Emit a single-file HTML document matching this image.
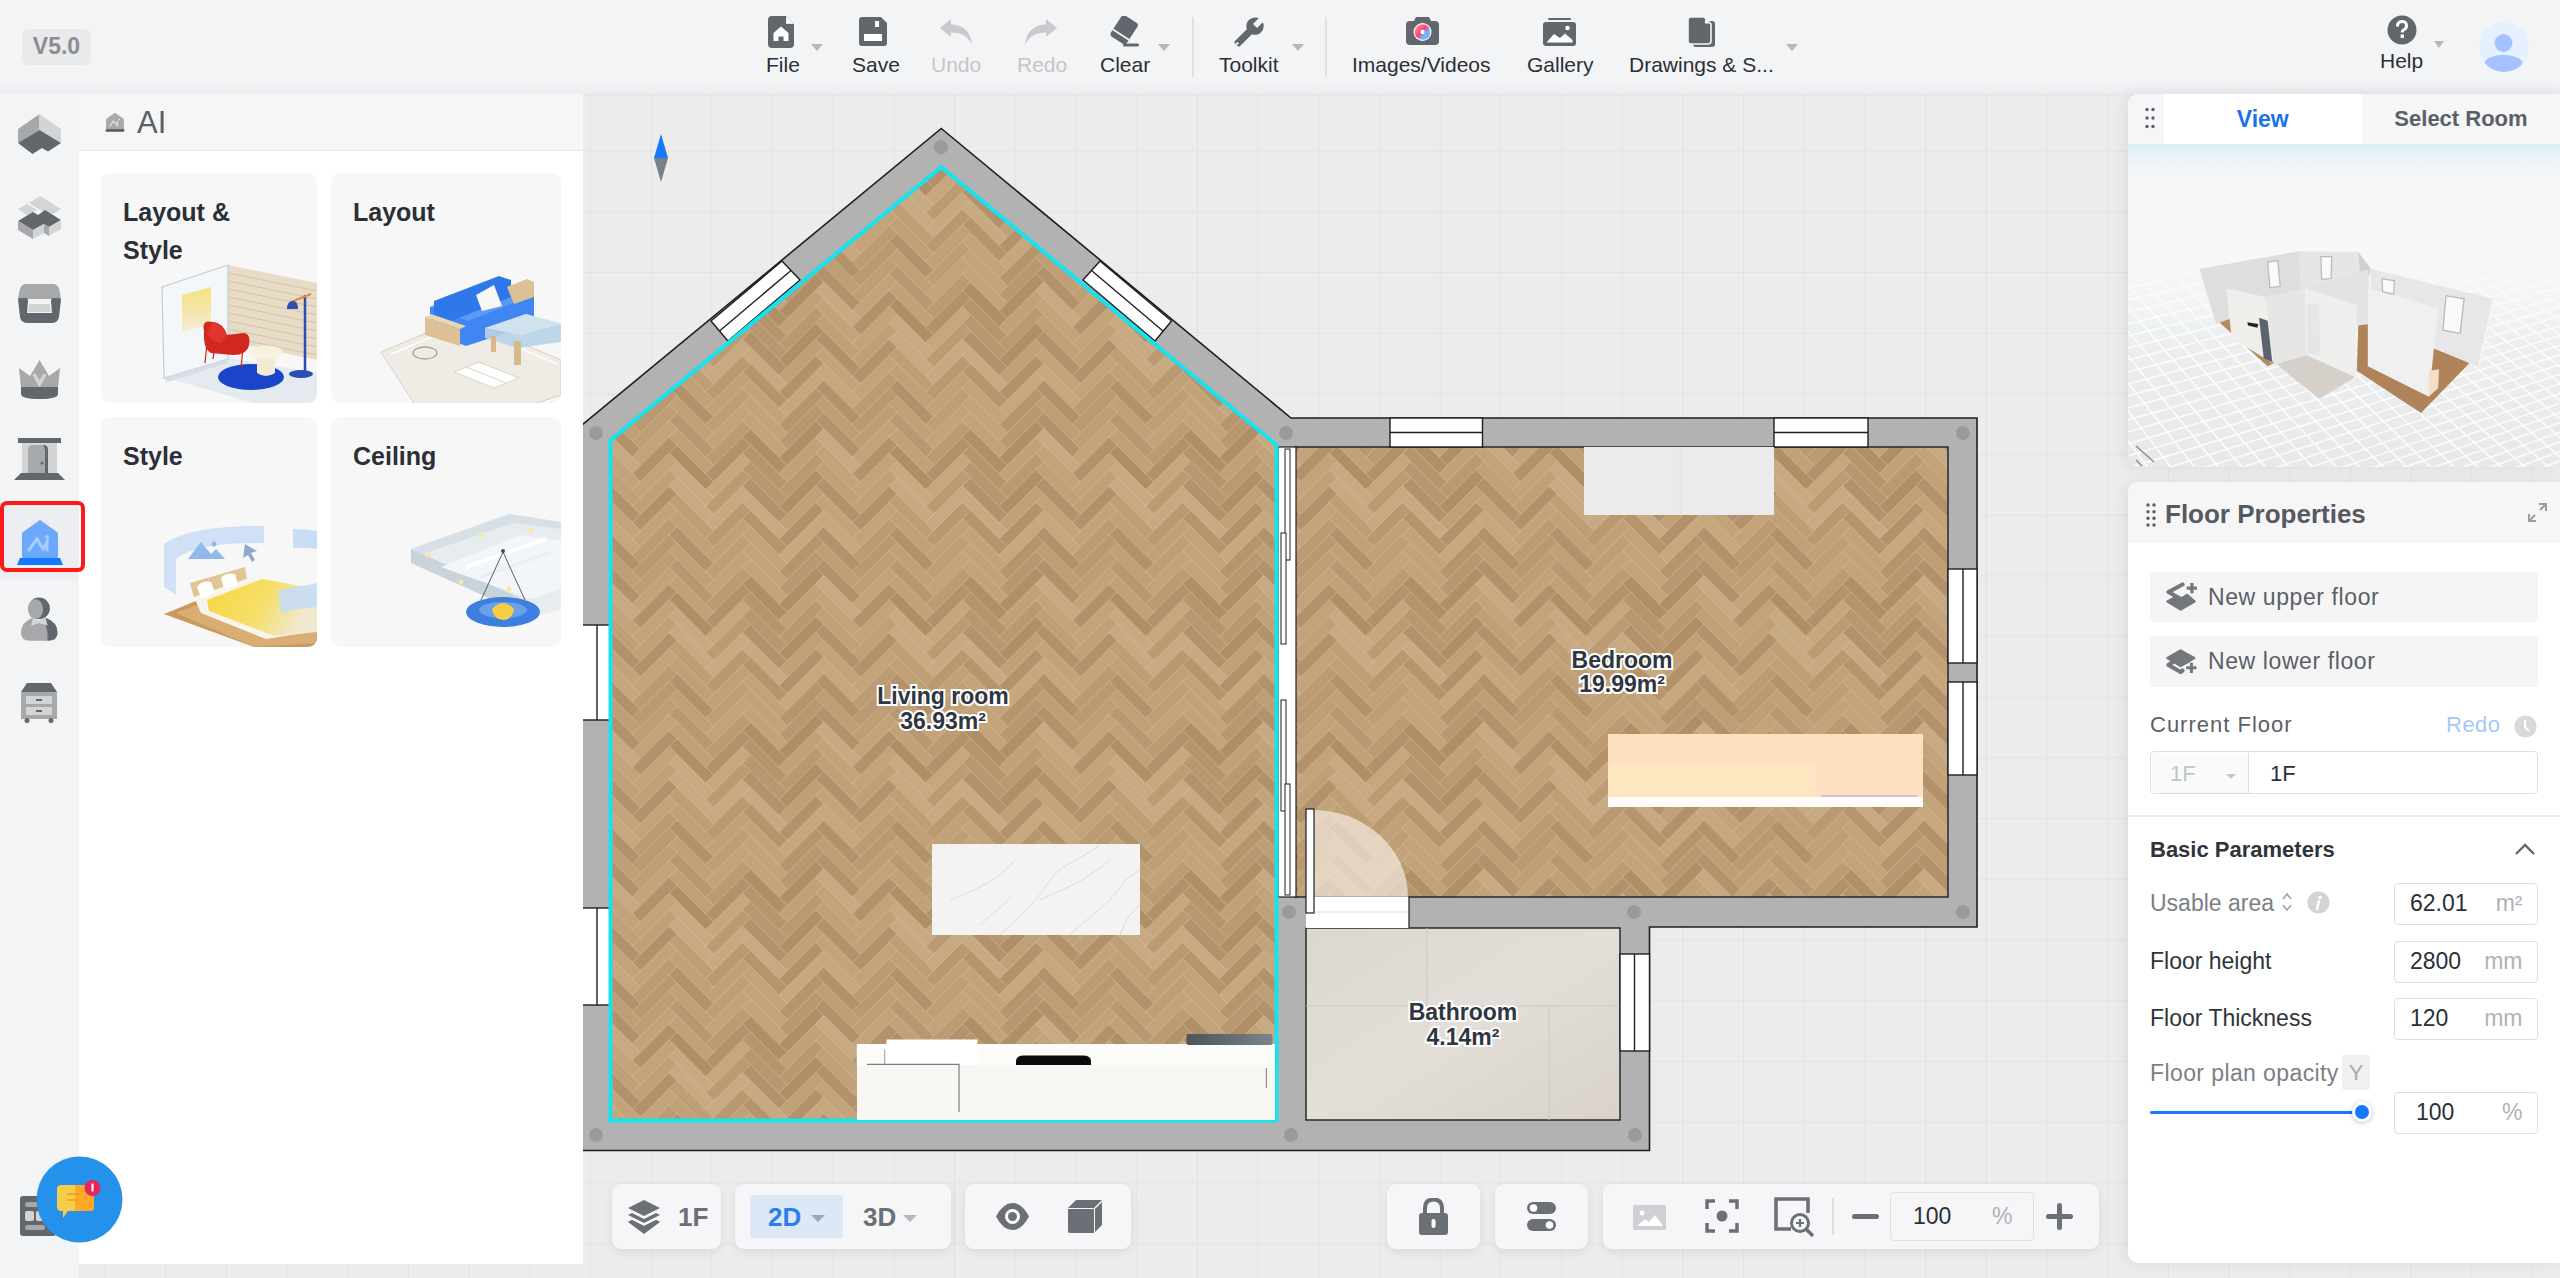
<!DOCTYPE html>
<html><head><meta charset="utf-8">
<style>
*{box-sizing:border-box;margin:0;padding:0}
html,body{width:2560px;height:1278px;overflow:hidden}
body{position:relative;font-family:"Liberation Sans",sans-serif;background-color:#ececec;
background-image:linear-gradient(to right,#e3e3e3 1px,transparent 1px),linear-gradient(to bottom,#e3e3e3 1px,transparent 1px);
background-size:60.7px 60.7px;background-position:43.8px 29.2px}
.abs{position:absolute}
#plan{position:absolute;left:0;top:0}
/* top toolbar */
#top{position:absolute;left:0;top:0;width:2560px;height:94px;background:linear-gradient(to bottom,rgba(244,245,247,0.9) 0,rgba(244,245,247,0.9) 80px,rgba(236,237,240,0.92) 94px);box-shadow:0 1px 3px rgba(0,0,0,0.04)}
.ver{position:absolute;left:22px;top:29px;width:69px;height:36px;border-radius:6px;background:#e9eaec;color:#8b8d90;font-weight:bold;font-size:23px;line-height:34px;text-align:center}
.ic{position:absolute}
.lbl{position:absolute;top:52.5px;font-size:21px;line-height:24px;color:#2b2f36;white-space:nowrap}
.dis{color:#c4c6c9}
.caret{position:absolute;width:0;height:0;border-left:6px solid transparent;border-right:6px solid transparent;border-top:7px solid #b5b7ba}
.sep{position:absolute;top:17px;width:2px;height:60px;background:#dfe0e2}
/* left sidebar */
#side{position:absolute;left:0;top:94px;width:79px;height:1184px;background:rgba(243,244,246,0.95)}
#panel{position:absolute;left:79px;top:94px;width:504px;height:1170px;background:#fff}
#phead{position:absolute;left:0;top:0;width:504px;height:57px;background:#f6f6f7;border-bottom:1.5px solid #e6e6e6}
.card{position:absolute;width:216px;height:230px;background:#f7f7f8;border-radius:9px;overflow:hidden}
.card .t{position:absolute;left:22px;top:20px;font-size:25px;font-weight:bold;color:#2b2f36;line-height:38px}
/* right */
#rp1{position:absolute;left:2128px;top:94px;width:432px;height:373px;background:#f5f6f8;border-radius:10px 0 0 10px;overflow:hidden;box-shadow:-3px 0 14px rgba(0,0,0,0.07)}
#rp2{position:absolute;left:2128px;top:482px;width:432px;height:781px;background:#fff;border-radius:10px 0 0 10px;overflow:hidden;box-shadow:-3px 0 14px rgba(0,0,0,0.07)}
.inp{position:absolute;left:266px;width:143.5px;height:42px;border:1.5px solid #dedede;border-radius:4px;background:#fff;padding-left:15px;font-size:23px;line-height:39px;color:#2b2f36}
.inp span{position:absolute;right:14px;top:0;color:#b0b3b7}
.bb{position:absolute;height:65px;background:#f6f6f8;border-radius:9px;box-shadow:0 3px 10px rgba(0,0,0,0.08)}
</style></head><body>

<svg id="plan" width="2560" height="1278" viewBox="0 0 2560 1278">
<defs>
<pattern id="hb" patternUnits="userSpaceOnUse" x="17" y="5" width="220.05" height="146.70">
<rect width="220.05" height="146.70" fill="#bc9a72"/>
<polygon points="0.0,0.0 36.7,36.7 28.5,44.8 -8.2,8.2" fill="#b08e66" stroke="#dccbb5" stroke-width="0.7" stroke-opacity="0.55"/>
<polygon points="0.0,146.7 36.7,183.4 28.5,191.5 -8.2,154.9" fill="#b08e66" stroke="#dccbb5" stroke-width="0.7" stroke-opacity="0.55"/>
<polygon points="220.1,0.0 256.7,36.7 248.6,44.8 211.9,8.2" fill="#b08e66" stroke="#dccbb5" stroke-width="0.7" stroke-opacity="0.55"/>
<polygon points="220.1,146.7 256.7,183.4 248.6,191.5 211.9,154.9" fill="#b08e66" stroke="#dccbb5" stroke-width="0.7" stroke-opacity="0.55"/>
<polygon points="65.2,8.2 73.4,16.3 36.7,53.0 28.5,44.8" fill="#c7a77e" stroke="#dccbb5" stroke-width="0.7" stroke-opacity="0.55"/>
<polygon points="0.0,16.3 36.7,53.0 28.5,61.1 -8.2,24.5" fill="#c8aa82" stroke="#dccbb5" stroke-width="0.7" stroke-opacity="0.55"/>
<polygon points="220.1,16.3 256.7,53.0 248.6,61.1 211.9,24.5" fill="#c8aa82" stroke="#dccbb5" stroke-width="0.7" stroke-opacity="0.55"/>
<polygon points="65.2,24.5 73.4,32.6 36.7,69.3 28.5,61.1" fill="#bc9a72" stroke="#dccbb5" stroke-width="0.7" stroke-opacity="0.55"/>
<polygon points="0.0,32.6 36.7,69.3 28.5,77.4 -8.2,40.8" fill="#c8aa82" stroke="#dccbb5" stroke-width="0.7" stroke-opacity="0.55"/>
<polygon points="220.1,32.6 256.7,69.3 248.6,77.4 211.9,40.8" fill="#c8aa82" stroke="#dccbb5" stroke-width="0.7" stroke-opacity="0.55"/>
<polygon points="65.2,40.8 73.4,48.9 36.7,85.6 28.5,77.4" fill="#c8aa82" stroke="#dccbb5" stroke-width="0.7" stroke-opacity="0.55"/>
<polygon points="0.0,48.9 36.7,85.6 28.5,93.7 -8.2,57.1" fill="#be9e75" stroke="#dccbb5" stroke-width="0.7" stroke-opacity="0.55"/>
<polygon points="220.1,48.9 256.7,85.6 248.6,93.7 211.9,57.1" fill="#be9e75" stroke="#dccbb5" stroke-width="0.7" stroke-opacity="0.55"/>
<polygon points="65.2,57.1 73.4,65.2 36.7,101.9 28.5,93.7" fill="#ba9870" stroke="#dccbb5" stroke-width="0.7" stroke-opacity="0.55"/>
<polygon points="0.0,65.2 36.7,101.9 28.5,110.0 -8.2,73.4" fill="#c0a077" stroke="#dccbb5" stroke-width="0.7" stroke-opacity="0.55"/>
<polygon points="220.1,65.2 256.7,101.9 248.6,110.0 211.9,73.4" fill="#c0a077" stroke="#dccbb5" stroke-width="0.7" stroke-opacity="0.55"/>
<polygon points="65.2,73.4 73.4,81.5 36.7,118.2 28.5,110.0" fill="#c1a178" stroke="#dccbb5" stroke-width="0.7" stroke-opacity="0.55"/>
<polygon points="0.0,81.5 36.7,118.2 28.5,126.3 -8.2,89.7" fill="#b3916a" stroke="#dccbb5" stroke-width="0.7" stroke-opacity="0.55"/>
<polygon points="220.1,81.5 256.7,118.2 248.6,126.3 211.9,89.7" fill="#b3916a" stroke="#dccbb5" stroke-width="0.7" stroke-opacity="0.55"/>
<polygon points="65.2,89.7 73.4,97.8 36.7,134.5 28.5,126.3" fill="#be9e75" stroke="#dccbb5" stroke-width="0.7" stroke-opacity="0.55"/>
<polygon points="0.0,97.8 36.7,134.5 28.5,142.6 -8.2,106.0" fill="#c0a077" stroke="#dccbb5" stroke-width="0.7" stroke-opacity="0.55"/>
<polygon points="220.1,97.8 256.7,134.5 248.6,142.6 211.9,106.0" fill="#c0a077" stroke="#dccbb5" stroke-width="0.7" stroke-opacity="0.55"/>
<polygon points="65.2,-40.8 73.4,-32.6 36.7,4.1 28.5,-4.1" fill="#c3a37a" stroke="#dccbb5" stroke-width="0.7" stroke-opacity="0.55"/>
<polygon points="65.2,106.0 73.4,114.1 36.7,150.8 28.5,142.6" fill="#c3a37a" stroke="#dccbb5" stroke-width="0.7" stroke-opacity="0.55"/>
<polygon points="0.0,-32.6 36.7,4.1 28.5,12.2 -8.2,-24.5" fill="#b99770" stroke="#dccbb5" stroke-width="0.7" stroke-opacity="0.55"/>
<polygon points="0.0,114.1 36.7,150.8 28.5,158.9 -8.2,122.3" fill="#b99770" stroke="#dccbb5" stroke-width="0.7" stroke-opacity="0.55"/>
<polygon points="220.1,-32.6 256.7,4.1 248.6,12.2 211.9,-24.5" fill="#b99770" stroke="#dccbb5" stroke-width="0.7" stroke-opacity="0.55"/>
<polygon points="220.1,114.1 256.7,150.8 248.6,158.9 211.9,122.3" fill="#b99770" stroke="#dccbb5" stroke-width="0.7" stroke-opacity="0.55"/>
<polygon points="65.2,-24.5 73.4,-16.3 36.7,20.4 28.5,12.2" fill="#bc9a72" stroke="#dccbb5" stroke-width="0.7" stroke-opacity="0.55"/>
<polygon points="65.2,122.3 73.4,130.4 36.7,167.1 28.5,158.9" fill="#bc9a72" stroke="#dccbb5" stroke-width="0.7" stroke-opacity="0.55"/>
<polygon points="0.0,-16.3 36.7,20.4 28.5,28.5 -8.2,-8.2" fill="#c1a178" stroke="#dccbb5" stroke-width="0.7" stroke-opacity="0.55"/>
<polygon points="0.0,130.4 36.7,167.1 28.5,175.2 -8.2,138.6" fill="#c1a178" stroke="#dccbb5" stroke-width="0.7" stroke-opacity="0.55"/>
<polygon points="220.1,-16.3 256.7,20.4 248.6,28.5 211.9,-8.2" fill="#c1a178" stroke="#dccbb5" stroke-width="0.7" stroke-opacity="0.55"/>
<polygon points="220.1,130.4 256.7,167.1 248.6,175.2 211.9,138.6" fill="#c1a178" stroke="#dccbb5" stroke-width="0.7" stroke-opacity="0.55"/>
<polygon points="65.2,-8.2 73.4,0.0 36.7,36.7 28.5,28.5" fill="#b3916a" stroke="#dccbb5" stroke-width="0.7" stroke-opacity="0.55"/>
<polygon points="65.2,138.6 73.4,146.7 36.7,183.4 28.5,175.2" fill="#b3916a" stroke="#dccbb5" stroke-width="0.7" stroke-opacity="0.55"/>
<polygon points="73.4,0.0 110.0,36.7 101.9,44.8 65.2,8.2" fill="#b6946c" stroke="#dccbb5" stroke-width="0.7" stroke-opacity="0.55"/>
<polygon points="73.4,146.7 110.0,183.4 101.9,191.5 65.2,154.9" fill="#b6946c" stroke="#dccbb5" stroke-width="0.7" stroke-opacity="0.55"/>
<polygon points="138.6,8.2 146.7,16.3 110.0,53.0 101.9,44.8" fill="#ba9870" stroke="#dccbb5" stroke-width="0.7" stroke-opacity="0.55"/>
<polygon points="73.4,16.3 110.0,53.0 101.9,61.1 65.2,24.5" fill="#b99770" stroke="#dccbb5" stroke-width="0.7" stroke-opacity="0.55"/>
<polygon points="138.6,24.5 146.7,32.6 110.0,69.3 101.9,61.1" fill="#b08e66" stroke="#dccbb5" stroke-width="0.7" stroke-opacity="0.55"/>
<polygon points="73.4,32.6 110.0,69.3 101.9,77.4 65.2,40.8" fill="#b3916a" stroke="#dccbb5" stroke-width="0.7" stroke-opacity="0.55"/>
<polygon points="138.6,40.8 146.7,48.9 110.0,85.6 101.9,77.4" fill="#c0a077" stroke="#dccbb5" stroke-width="0.7" stroke-opacity="0.55"/>
<polygon points="73.4,48.9 110.0,85.6 101.9,93.7 65.2,57.1" fill="#c8aa82" stroke="#dccbb5" stroke-width="0.7" stroke-opacity="0.55"/>
<polygon points="138.6,57.1 146.7,65.2 110.0,101.9 101.9,93.7" fill="#b3916a" stroke="#dccbb5" stroke-width="0.7" stroke-opacity="0.55"/>
<polygon points="73.4,65.2 110.0,101.9 101.9,110.0 65.2,73.4" fill="#b6946c" stroke="#dccbb5" stroke-width="0.7" stroke-opacity="0.55"/>
<polygon points="138.6,73.4 146.7,81.5 110.0,118.2 101.9,110.0" fill="#c7a77e" stroke="#dccbb5" stroke-width="0.7" stroke-opacity="0.55"/>
<polygon points="73.4,81.5 110.0,118.2 101.9,126.3 65.2,89.7" fill="#c3a37a" stroke="#dccbb5" stroke-width="0.7" stroke-opacity="0.55"/>
<polygon points="138.6,89.7 146.7,97.8 110.0,134.5 101.9,126.3" fill="#b6946c" stroke="#dccbb5" stroke-width="0.7" stroke-opacity="0.55"/>
<polygon points="73.4,97.8 110.0,134.5 101.9,142.6 65.2,106.0" fill="#c3a37a" stroke="#dccbb5" stroke-width="0.7" stroke-opacity="0.55"/>
<polygon points="138.6,-40.8 146.7,-32.6 110.0,4.1 101.9,-4.1" fill="#b99770" stroke="#dccbb5" stroke-width="0.7" stroke-opacity="0.55"/>
<polygon points="138.6,106.0 146.7,114.1 110.0,150.8 101.9,142.6" fill="#b99770" stroke="#dccbb5" stroke-width="0.7" stroke-opacity="0.55"/>
<polygon points="73.4,-32.6 110.0,4.1 101.9,12.2 65.2,-24.5" fill="#c3a37a" stroke="#dccbb5" stroke-width="0.7" stroke-opacity="0.55"/>
<polygon points="73.4,114.1 110.0,150.8 101.9,158.9 65.2,122.3" fill="#c3a37a" stroke="#dccbb5" stroke-width="0.7" stroke-opacity="0.55"/>
<polygon points="138.6,-24.5 146.7,-16.3 110.0,20.4 101.9,12.2" fill="#b08e66" stroke="#dccbb5" stroke-width="0.7" stroke-opacity="0.55"/>
<polygon points="138.6,122.3 146.7,130.4 110.0,167.1 101.9,158.9" fill="#b08e66" stroke="#dccbb5" stroke-width="0.7" stroke-opacity="0.55"/>
<polygon points="73.4,-16.3 110.0,20.4 101.9,28.5 65.2,-8.2" fill="#b08e66" stroke="#dccbb5" stroke-width="0.7" stroke-opacity="0.55"/>
<polygon points="73.4,130.4 110.0,167.1 101.9,175.2 65.2,138.6" fill="#b08e66" stroke="#dccbb5" stroke-width="0.7" stroke-opacity="0.55"/>
<polygon points="138.6,-8.2 146.7,0.0 110.0,36.7 101.9,28.5" fill="#c1a178" stroke="#dccbb5" stroke-width="0.7" stroke-opacity="0.55"/>
<polygon points="138.6,138.6 146.7,146.7 110.0,183.4 101.9,175.2" fill="#c1a178" stroke="#dccbb5" stroke-width="0.7" stroke-opacity="0.55"/>
<polygon points="146.7,0.0 183.4,36.7 175.2,44.8 138.6,8.2" fill="#c3a37a" stroke="#dccbb5" stroke-width="0.7" stroke-opacity="0.55"/>
<polygon points="146.7,146.7 183.4,183.4 175.2,191.5 138.6,154.9" fill="#c3a37a" stroke="#dccbb5" stroke-width="0.7" stroke-opacity="0.55"/>
<polygon points="-8.1,8.2 0.0,16.3 -36.7,53.0 -44.8,44.8" fill="#c3a37a" stroke="#dccbb5" stroke-width="0.7" stroke-opacity="0.55"/>
<polygon points="211.9,8.2 220.1,16.3 183.4,53.0 175.2,44.8" fill="#c3a37a" stroke="#dccbb5" stroke-width="0.7" stroke-opacity="0.55"/>
<polygon points="146.7,16.3 183.4,53.0 175.2,61.1 138.6,24.5" fill="#c0a077" stroke="#dccbb5" stroke-width="0.7" stroke-opacity="0.55"/>
<polygon points="-8.1,24.5 0.0,32.6 -36.7,69.3 -44.8,61.1" fill="#c0a077" stroke="#dccbb5" stroke-width="0.7" stroke-opacity="0.55"/>
<polygon points="211.9,24.5 220.1,32.6 183.4,69.3 175.2,61.1" fill="#c0a077" stroke="#dccbb5" stroke-width="0.7" stroke-opacity="0.55"/>
<polygon points="146.7,32.6 183.4,69.3 175.2,77.4 138.6,40.8" fill="#b3916a" stroke="#dccbb5" stroke-width="0.7" stroke-opacity="0.55"/>
<polygon points="-8.1,40.8 0.0,48.9 -36.7,85.6 -44.8,77.4" fill="#b3916a" stroke="#dccbb5" stroke-width="0.7" stroke-opacity="0.55"/>
<polygon points="211.9,40.8 220.1,48.9 183.4,85.6 175.2,77.4" fill="#b3916a" stroke="#dccbb5" stroke-width="0.7" stroke-opacity="0.55"/>
<polygon points="146.7,48.9 183.4,85.6 175.2,93.7 138.6,57.1" fill="#c3a37a" stroke="#dccbb5" stroke-width="0.7" stroke-opacity="0.55"/>
<polygon points="-8.1,57.1 0.0,65.2 -36.7,101.9 -44.8,93.7" fill="#c3a37a" stroke="#dccbb5" stroke-width="0.7" stroke-opacity="0.55"/>
<polygon points="211.9,57.1 220.1,65.2 183.4,101.9 175.2,93.7" fill="#c3a37a" stroke="#dccbb5" stroke-width="0.7" stroke-opacity="0.55"/>
<polygon points="146.7,65.2 183.4,101.9 175.2,110.0 138.6,73.4" fill="#c7a77e" stroke="#dccbb5" stroke-width="0.7" stroke-opacity="0.55"/>
<polygon points="-8.1,73.4 0.0,81.5 -36.7,118.2 -44.8,110.0" fill="#bc9a72" stroke="#dccbb5" stroke-width="0.7" stroke-opacity="0.55"/>
<polygon points="211.9,73.4 220.1,81.5 183.4,118.2 175.2,110.0" fill="#bc9a72" stroke="#dccbb5" stroke-width="0.7" stroke-opacity="0.55"/>
<polygon points="146.7,81.5 183.4,118.2 175.2,126.3 138.6,89.7" fill="#b3916a" stroke="#dccbb5" stroke-width="0.7" stroke-opacity="0.55"/>
<polygon points="-8.1,89.7 0.0,97.8 -36.7,134.5 -44.8,126.3" fill="#ba9870" stroke="#dccbb5" stroke-width="0.7" stroke-opacity="0.55"/>
<polygon points="211.9,89.7 220.1,97.8 183.4,134.5 175.2,126.3" fill="#ba9870" stroke="#dccbb5" stroke-width="0.7" stroke-opacity="0.55"/>
<polygon points="146.7,97.8 183.4,134.5 175.2,142.6 138.6,106.0" fill="#be9e75" stroke="#dccbb5" stroke-width="0.7" stroke-opacity="0.55"/>
<polygon points="-8.1,-40.8 0.0,-32.6 -36.7,4.1 -44.8,-4.1" fill="#be9e75" stroke="#dccbb5" stroke-width="0.7" stroke-opacity="0.55"/>
<polygon points="-8.1,106.0 0.0,114.1 -36.7,150.8 -44.8,142.6" fill="#be9e75" stroke="#dccbb5" stroke-width="0.7" stroke-opacity="0.55"/>
<polygon points="211.9,-40.8 220.1,-32.6 183.4,4.1 175.2,-4.1" fill="#be9e75" stroke="#dccbb5" stroke-width="0.7" stroke-opacity="0.55"/>
<polygon points="211.9,106.0 220.1,114.1 183.4,150.8 175.2,142.6" fill="#be9e75" stroke="#dccbb5" stroke-width="0.7" stroke-opacity="0.55"/>
<polygon points="146.7,-32.6 183.4,4.1 175.2,12.2 138.6,-24.5" fill="#b3916a" stroke="#dccbb5" stroke-width="0.7" stroke-opacity="0.55"/>
<polygon points="146.7,114.1 183.4,150.8 175.2,158.9 138.6,122.3" fill="#b3916a" stroke="#dccbb5" stroke-width="0.7" stroke-opacity="0.55"/>
<polygon points="-8.1,-24.5 0.0,-16.3 -36.7,20.4 -44.8,12.2" fill="#c3a37a" stroke="#dccbb5" stroke-width="0.7" stroke-opacity="0.55"/>
<polygon points="-8.1,122.3 0.0,130.4 -36.7,167.1 -44.8,158.9" fill="#c3a37a" stroke="#dccbb5" stroke-width="0.7" stroke-opacity="0.55"/>
<polygon points="211.9,-24.5 220.1,-16.3 183.4,20.4 175.2,12.2" fill="#c3a37a" stroke="#dccbb5" stroke-width="0.7" stroke-opacity="0.55"/>
<polygon points="211.9,122.3 220.1,130.4 183.4,167.1 175.2,158.9" fill="#c3a37a" stroke="#dccbb5" stroke-width="0.7" stroke-opacity="0.55"/>
<polygon points="146.7,-16.3 183.4,20.4 175.2,28.5 138.6,-8.2" fill="#c8aa82" stroke="#dccbb5" stroke-width="0.7" stroke-opacity="0.55"/>
<polygon points="146.7,130.4 183.4,167.1 175.2,175.2 138.6,138.6" fill="#c8aa82" stroke="#dccbb5" stroke-width="0.7" stroke-opacity="0.55"/>
<polygon points="-8.1,-8.2 0.0,0.0 -36.7,36.7 -44.8,28.5" fill="#b3916a" stroke="#dccbb5" stroke-width="0.7" stroke-opacity="0.55"/>
<polygon points="-8.1,138.6 0.0,146.7 -36.7,183.4 -44.8,175.2" fill="#b3916a" stroke="#dccbb5" stroke-width="0.7" stroke-opacity="0.55"/>
<polygon points="211.9,-8.2 220.1,0.0 183.4,36.7 175.2,28.5" fill="#b3916a" stroke="#dccbb5" stroke-width="0.7" stroke-opacity="0.55"/>
<polygon points="211.9,138.6 220.1,146.7 183.4,183.4 175.2,175.2" fill="#b3916a" stroke="#dccbb5" stroke-width="0.7" stroke-opacity="0.55"/>
</pattern>
<linearGradient id="bathg" x1="0" y1="0" x2="1" y2="1">
<stop offset="0" stop-color="#dcd7d1"/><stop offset="0.5" stop-color="#e3ded8"/><stop offset="1" stop-color="#d8d2cb"/>
</linearGradient>
<linearGradient id="bedg" x1="0" y1="0" x2="1" y2="0">
<stop offset="0" stop-color="#fde4c2"/><stop offset="0.6" stop-color="#fde6c3"/><stop offset="1" stop-color="#fee0c2"/>
</linearGradient>
</defs>
<!-- walls -->
<polygon points="941.3,128.5 1291,418 1977,418 1977,927 1649.5,927 1649.5,1150.5 560,1150.5 560,443.2" fill="#b2b2b2" stroke="#1e1e1e" stroke-width="1.6"/>
<!-- floors -->
<polygon points="941.3,167 610.5,440.2 610.5,1120.5 1276.5,1120.5 1276.5,445" fill="url(#hb)"/>
<rect x="1295" y="447" width="653" height="450" fill="url(#hb)" stroke="#1e1e1e" stroke-width="1.4"/>
<rect x="1306" y="928" width="314" height="192" fill="url(#bathg)" stroke="#1e1e1e" stroke-width="1.4"/>
<path d="M1427,928 V1006 M1306,1006 H1620 M1549,1006 V1120" stroke="#cfc9c2" stroke-width="1"/>
<!-- living/bedroom opening -->
<rect x="1278" y="447" width="18" height="450" fill="#fff" stroke="#1e1e1e" stroke-width="1.2"/>
<rect x="1285" y="449" width="5" height="111" fill="#fff" stroke="#1e1e1e" stroke-width="1"/>
<rect x="1281" y="533" width="5" height="111" fill="#fff" stroke="#1e1e1e" stroke-width="1"/>
<rect x="1281" y="700" width="5" height="111" fill="#fff" stroke="#1e1e1e" stroke-width="1"/>
<rect x="1285" y="784" width="5" height="111" fill="#fff" stroke="#1e1e1e" stroke-width="1"/>
<!-- door opening -->
<rect x="1306" y="897" width="103" height="31" fill="#fff"/>
<line x1="1306" y1="912" x2="1409" y2="912" stroke="#ddd" stroke-width="1"/>
<line x1="1409" y1="897" x2="1409" y2="928" stroke="#1e1e1e" stroke-width="1.2"/>
<path d="M1313,897 V810 A95,87 0 0 1 1408,897 Z" fill="rgba(250,244,238,0.62)"/>
<rect x="1306" y="809" width="8" height="104" fill="#fff" stroke="#1e1e1e" stroke-width="1.2"/>
<!-- windows -->
<g fill="#fff" stroke="#1e1e1e" stroke-width="1.4">
<polygon points="711,321 782,261 800,280 728,341"/><line x1="719.5" y1="331" x2="791" y2="270.5"/>
<polygon points="1100,261 1171.5,321 1155,341 1083,280"/><line x1="1091.5" y1="270.5" x2="1163" y2="331"/>
<rect x="1390" y="418" width="92.5" height="29"/><line x1="1390" y1="432.5" x2="1482.5" y2="432.5"/>
<rect x="1774" y="418" width="94" height="29"/><line x1="1774" y1="432.5" x2="1868" y2="432.5"/>
<rect x="1948" y="569" width="29" height="94"/><line x1="1963" y1="569" x2="1963" y2="663"/>
<rect x="1948" y="682" width="29" height="93"/><line x1="1963" y1="682" x2="1963" y2="775"/>
<rect x="1620" y="954" width="29.5" height="97"/><line x1="1634.5" y1="954" x2="1634.5" y2="1051"/>
<rect x="560" y="625" width="51" height="95"/><line x1="597" y1="625" x2="597" y2="720"/>
<rect x="560" y="908" width="51" height="97"/><line x1="597" y1="908" x2="597" y2="1005"/>
</g>
<!-- corner posts -->
<g fill="#9a9a9a">
<circle cx="941" cy="147" r="7"/><circle cx="596" cy="433" r="7"/><circle cx="1286" cy="433" r="7"/>
<circle cx="1963" cy="433" r="7"/><circle cx="1963" cy="912" r="7"/><circle cx="1634" cy="912" r="7"/>
<circle cx="1289" cy="912" r="7"/><circle cx="596" cy="1135" r="7"/><circle cx="1291" cy="1135" r="7"/><circle cx="1635" cy="1135" r="7"/>
</g>
<!-- cyan selection -->
<polygon points="941.3,167 610.5,440.2 610.5,1120.5 1276.5,1120.5 1276.5,445" fill="none" stroke="#14e3f0" stroke-width="4"/>
<!-- bedroom furniture -->
<rect x="1584" y="447" width="190" height="68" fill="#ebebeb"/>
<line x1="1680" y1="447" x2="1680" y2="515" stroke="#e2e2e2" stroke-width="1"/>
<rect x="1608" y="734" width="315" height="73" fill="#fee1c1"/>
<rect x="1608" y="766" width="207" height="31" fill="#fee6c1"/>
<rect x="1608" y="797" width="315" height="10" fill="#fffdfa"/>
<line x1="1821" y1="796" x2="1917" y2="796" stroke="#d9bfd6" stroke-width="2"/>
<!-- living furniture -->
<rect x="932" y="844" width="208" height="91" fill="#f3f3f2"/>
<g fill="none" stroke="#d6d6d1" stroke-width="0.9" opacity="0.9">
<path d="M1000,935 C1020,915 1035,905 1050,880 C1060,865 1080,860 1100,845"/>
<path d="M950,900 C975,890 1000,880 1015,860"/>
<path d="M1070,935 C1090,915 1110,905 1125,880 L1140,870"/>
<path d="M1040,900 C1060,890 1080,885 1110,860"/>
<path d="M980,925 C990,915 1005,905 1012,895"/>
<path d="M1120,935 C1125,920 1132,912 1140,905"/>
</g>
<rect x="857" y="1044" width="418" height="76" fill="#f8f7f4"/>
<rect x="857" y="1044" width="1060" height="21" fill="#fcfcfb" transform="scale(0.3943,1) translate(1316,0)"/>
<rect x="886.5" y="1039.5" width="91" height="25.5" fill="#fff"/>
<path d="M867,1064.3 H959 V1112" stroke="#7d7d7d" stroke-width="1.2" fill="none"/>
<line x1="884.7" y1="1050" x2="884.7" y2="1064" stroke="#999" stroke-width="1"/>
<path d="M1016,1065 V1061 Q1016,1055.5 1024,1055.5 H1083 Q1091,1055.5 1091,1061 V1065Z" fill="#0b0b0b"/>
<defs><linearGradient id="hood" x1="0" y1="0" x2="1" y2="0"><stop offset="0" stop-color="#4d535b"/><stop offset="1" stop-color="#7c838b"/></linearGradient></defs>
<rect x="1186.5" y="1034" width="86" height="11" rx="2" fill="url(#hood)"/>
<line x1="1266.3" y1="1068" x2="1266.3" y2="1088" stroke="#777" stroke-width="1"/>
<!-- labels -->
<g font-family="Liberation Sans" font-weight="bold" font-size="23" fill="#2f3640" stroke="#fff" stroke-width="4" paint-order="stroke" text-anchor="middle">
<text x="943" y="704">Living room</text><text x="943" y="729">36.93m²</text>
<text x="1622" y="668">Bedroom</text><text x="1622" y="692">19.99m²</text>
<text x="1463" y="1020">Bathroom</text><text x="1463" y="1045">4.14m²</text>
</g>
<!-- compass -->
<polygon points="661,134 668,158 654,158" fill="#1677ff"/>
<polygon points="654,158 668,158 661,182" fill="#7a8088"/>
</svg>


<div id="top">
  <div class="ver">V5.0</div>
  <!-- File -->
  <svg class="ic" style="left:768px;top:16px" width="26" height="32" viewBox="0 0 26 32"><path d="M4,0 H18 L26,8 V28 Q26,32 22,32 H4 Q0,32 0,28 V4 Q0,0 4,0Z" fill="#62666d"/><path d="M18,0 V8 H26Z" fill="#f4f5f7" opacity="0.9"/><path d="M19,1.5 V7 H24.5Z" fill="#fff"/><path d="M5.5,17 L13,10.5 L20.5,17 V25 H15.5 V20.5 H10.5 V25 H5.5Z" fill="#fff"/></svg>
  <div class="lbl" style="left:766px">File</div>
  <div class="caret" style="left:811px;top:44px"></div>
  <!-- Save -->
  <svg class="ic" style="left:859px;top:17px" width="28" height="29" viewBox="0 0 28 29"><path d="M3,0 H22 L28,6 V26 Q28,29 25,29 H3 Q0,29 0,26 V3 Q0,0 3,0Z" fill="#62666d"/><rect x="16" y="4" width="4" height="6" fill="#fff"/><rect x="5" y="17" width="18" height="7" fill="#fff"/></svg>
  <div class="lbl" style="left:852px">Save</div>
  <!-- Undo -->
  <svg class="ic" style="left:940px;top:19px" width="32" height="26" viewBox="0 0 32 26"><path d="M0,9 L11,0 V5.5 C22,5.5 31,12 32,26 C28,17 21,13.5 11,13.5 V18Z" fill="#c9cacd"/></svg>
  <div class="lbl dis" style="left:931px">Undo</div>
  <!-- Redo -->
  <svg class="ic" style="left:1025px;top:19px" width="32" height="26" viewBox="0 0 32 26"><path d="M32,9 L21,0 V5.5 C10,5.5 1,12 0,26 C4,17 11,13.5 21,13.5 V18Z" fill="#c9cacd"/></svg>
  <div class="lbl dis" style="left:1017px">Redo</div>
  <!-- Clear -->
  <svg class="ic" style="left:1109px;top:16px" width="32" height="31" viewBox="0 0 32 31"><g transform="rotate(33 15 13)"><rect x="6" y="1" width="19" height="25" rx="3" fill="#62666d"/><rect x="6" y="18.5" width="19" height="1.8" fill="#f4f5f7"/></g><rect x="14" y="27.5" width="16" height="3" rx="1.5" fill="#62666d"/></svg>
  <div class="lbl" style="left:1100px">Clear</div>
  <div class="caret" style="left:1158px;top:44px"></div>
  <div class="sep" style="left:1192px"></div>
  <!-- Toolkit -->
  <svg class="ic" style="left:1233px;top:16px" width="32" height="32" viewBox="0 0 24 24"><g transform="translate(24,0) scale(-1,1)"><path d="M22.7 19l-9.1-9.1c.9-2.3.4-5-1.5-6.9-2-2-5-2.4-7.4-1.3L9 6 6 9 1.6 4.7C.4 7.1.9 10.1 2.9 12.1c1.9 1.9 4.6 2.4 6.9 1.5l9.1 9.1c.4.4 1 .4 1.4 0l2.3-2.3c.5-.4.5-1.1.1-1.4z" fill="#62666d"/></g><circle cx="3.2" cy="20.6" r="1" fill="#f4f5f7"/></svg>
  <div class="lbl" style="left:1219px">Toolkit</div>
  <div class="caret" style="left:1292px;top:44px"></div>
  <div class="sep" style="left:1325px"></div>
  <!-- Images -->
  <svg class="ic" style="left:1406px;top:17px" width="33" height="28" viewBox="0 0 33 28"><path d="M10,0 H23 L25,4 H29 Q33,4 33,8 V24 Q33,28 29,28 H4 Q0,28 0,24 V8 Q0,4 4,4 H8Z" fill="#62666d"/><defs><linearGradient id="camg" x1="0" y1="0" x2="1" y2="1"><stop offset="0" stop-color="#ffb36b"/><stop offset="0.45" stop-color="#ff3d7f"/><stop offset="0.7" stop-color="#5ec8ff"/><stop offset="1" stop-color="#6d6dff"/></linearGradient></defs><circle cx="16.5" cy="15" r="9" fill="#fff"/><circle cx="16.5" cy="15" r="7.8" fill="url(#camg)"/><circle cx="16.5" cy="15" r="2.2" fill="#fff"/></svg>
  <div class="lbl" style="left:1352px">Images/Videos</div>
  <!-- Gallery -->
  <svg class="ic" style="left:1543px;top:18px" width="33" height="28" viewBox="0 0 33 28"><rect x="5" y="0" width="23" height="2" rx="1" fill="#62666d"/><rect x="0" y="4" width="33" height="24" rx="3" fill="#62666d"/><path d="M3.5,24.5 L11,16 L17,20 L22,15.5 L29.5,22 V24.5Z" fill="#fff"/><circle cx="24.5" cy="10" r="2.3" fill="#fff"/></svg>
  <div class="lbl" style="left:1527px">Gallery</div>
  <!-- Drawings -->
  <svg class="ic" style="left:1688px;top:17px" width="27" height="30" viewBox="0 0 27 30"><path d="M5,4 H24 Q27,4 27,7 V27 Q27,30 24,30 H8 Q5,30 5,27Z" fill="#62666d"/><path d="M3,0 H16 L23,7 V24 Q23,27 20,27 H3 Q0,27 0,24 V3 Q0,0 3,0Z" fill="#62666d" stroke="#f4f5f7" stroke-width="1.6"/><path d="M17,2 V6.5 H21.5Z" fill="#fff"/></svg>
  <div class="lbl" style="left:1629px">Drawings &amp; S...</div>
  <div class="caret" style="left:1786px;top:44px"></div>
  <!-- Help -->
  <svg class="ic" style="left:2387px;top:15px" width="30" height="30" viewBox="0 0 30 30"><circle cx="15" cy="15" r="14.5" fill="#62666d"/><path d="M10.5,11.5 Q10.5,6.5 15,6.5 Q19.5,6.5 19.5,11 Q19.5,13.5 16.5,15 Q15.2,15.8 15.2,17.5" stroke="#fff" stroke-width="3" fill="none"/><rect x="13.6" y="19.5" width="3.4" height="3.4" fill="#fff"/></svg>
  <div class="lbl" style="left:2380px;top:49px">Help</div>
  <div class="caret" style="left:2434px;top:41px;border-left-width:5px;border-right-width:5px"></div>
  <svg class="ic" style="left:2479px;top:22px" width="50" height="50" viewBox="0 0 50 50"><defs><clipPath id="avc"><circle cx="25" cy="25" r="25"/></clipPath></defs><circle cx="25" cy="25" r="25" fill="#e6f0ff"/><circle cx="24.5" cy="21" r="9" fill="#a3c2ff"/><g clip-path="url(#avc)"><ellipse cx="24.5" cy="41.5" rx="19" ry="8.5" fill="#a3c2ff"/></g></svg>
</div>


<div id="side">
  <div class="abs" style="left:0;top:411px;width:79px;height:74px;background:#eceef1"></div>
  <!-- icon1 cube -->
  <svg class="ic" style="left:18px;top:20px" width="43" height="40" viewBox="0 0 43 40"><path d="M0,15 L21.5,0 V16 L0,29Z" fill="#a7a8aa"/><path d="M21.5,0 L43,15 V29 L21.5,16Z" fill="#d3d4d6"/><path d="M0,29 L21.5,16 L43,29 L30,37.5 L24,34 L14.5,40Z" fill="#62666d"/></svg>
  <!-- icon2 -->
  <svg class="ic" style="left:18px;top:102px" width="43" height="43" viewBox="0 0 43 43"><path d="M22,0 L43,13 L32,20 L11,7Z" fill="#d3d4d6"/><path d="M0,13 L9,8 L19,14 L10,20Z" fill="#d3d4d6"/><path d="M0,25 L15,16 L20,19 L27,14 L43,24 L31,31 L26,28 L15,34Z" fill="#62666d"/><path d="M0,25 L15,34 V43 L0,34Z" fill="#a7a8aa"/><path d="M15,34 L26,28 V37 L15,43Z" fill="#d3d4d6"/><path d="M31,31 L43,24 V33 L31,40Z" fill="#d3d4d6"/><path d="M26,28 L31,31 V40 L26,37Z" fill="#a7a8aa"/></svg>
  <!-- icon3 sofa -->
  <svg class="ic" style="left:18px;top:190px" width="43" height="39" viewBox="0 0 43 39"><path d="M8,0 H35 Q41,0 42,9 L43,15 H0 L1,9 Q2,0 8,0Z" fill="#a7a8aa"/><path d="M0,15 Q0,14 3,14 H8 Q10,14 10,17 L9,29 H34 L33,17 Q33,14 36,14 H40 Q43,14 43,16 L41,33 Q40,39 33,39 H10 Q3,39 2,33Z" fill="#62666d"/><path d="M11,20 H32 L33,28 H10Z" fill="#d3d4d6"/></svg>
  <!-- icon4 crown -->
  <svg class="ic" style="left:19px;top:266px" width="41" height="39" viewBox="0 0 41 39"><path d="M0,8 L11,16 L20.5,0 L30,16 L41,8 L39,28 H2Z" fill="#a7a8aa"/><path d="M15,14 L20.5,24 L26,14" stroke="#d3d4d6" stroke-width="3.5" fill="none"/><path d="M2,27 H39 V34 Q39,39 20.5,39 Q2,39 2,34Z" fill="#62666d"/></svg>
  <!-- icon5 fireplace -->
  <svg class="ic" style="left:14px;top:344px" width="51" height="42" viewBox="0 0 51 42"><rect x="4" y="0" width="43" height="5" fill="#62666d"/><rect x="8" y="5" width="35" height="33" fill="#d3d4d6"/><path d="M14,38 V12 Q14,7 19,7 H29 Q34,7 34,12 V38Z" fill="#a7a8aa"/><path d="M29,7 Q34,7 34,12 V38 H31 V12 Q31,9 29,7Z" fill="#62666d"/><circle cx="28" cy="25" r="1.5" fill="#62666d"/><path d="M0,42 L7,35 H44 L51,42Z" fill="#62666d"/></svg>
  <!-- icon6 AI active -->
  <svg class="ic" style="left:17px;top:426px" width="46" height="45" viewBox="0 0 46 45"><path d="M23,0 L40,12 Q41,13 41,15 V36 Q41,40 37,40 H9 Q5,40 5,36 V15 Q5,13 6,12Z" fill="#6aa9fc"/><path d="M12,30 L20,19 L26,29 L30,22 V30" stroke="#a9cdfd" stroke-width="3" fill="none" stroke-linecap="round"/><circle cx="30" cy="17" r="2" fill="#a9cdfd"/><path d="M3,38 H43 L46,45 H0Z" fill="#1677ff"/></svg>
  <!-- icon7 person -->
  <svg class="ic" style="left:21px;top:503px" width="37" height="45" viewBox="0 0 37 45"><circle cx="18.1" cy="11.3" r="10.8" fill="#62666d"/><ellipse cx="14.6" cy="12.2" rx="7.5" ry="9.9" fill="#a7a8aa"/><path d="M0,36 Q0,25 11,21 L18,23.5 L25,21 Q36.5,25 36.5,36 Q36.5,43.5 28,43.8 H9 Q0,43.5 0,36Z" fill="#a7a8aa"/><path d="M25,21 Q36.5,25 36.5,36 Q36.5,43.3 26.5,43.8 Q27.5,32 23,26Z" fill="#62666d"/><path d="M10.1,28.7 L12,21.2 L18.1,23 L24.7,21.2 L26.6,28.7 L18.1,25.9Z" fill="#d3d4d6"/></svg>
  <!-- icon8 nightstand -->
  <svg class="ic" style="left:21px;top:589px" width="36" height="40" viewBox="0 0 36 40"><path d="M6,0 H30 L36,9 H0Z" fill="#62666d"/><rect x="0" y="9" width="36" height="27" fill="#a7a8aa"/><rect x="5" y="13" width="26" height="8" fill="#d3d4d6"/><rect x="5" y="24" width="26" height="8" fill="#d3d4d6"/><rect x="15" y="16" width="6" height="2" fill="#62666d"/><rect x="15" y="27" width="6" height="2" fill="#62666d"/><circle cx="6" cy="37.5" r="2.5" fill="#62666d"/><circle cx="30" cy="37.5" r="2.5" fill="#62666d"/></svg>
  <!-- bottom icon -->
  <svg class="ic" style="left:20px;top:1102px" width="36" height="40" viewBox="0 0 36 40"><rect x="0" y="0" width="36" height="40" rx="3" fill="#62666d"/><rect x="5" y="6" width="26" height="5" rx="2.5" fill="#a7a8aa"/><rect x="5" y="15" width="9" height="10" rx="2" fill="#d3d4d6"/><rect x="16" y="15" width="12" height="10" rx="2" fill="#d3d4d6"/><rect x="5" y="29" width="20" height="5" rx="2.5" fill="#a7a8aa"/></svg>
</div>

<div id="panel">
  <div id="phead">
    <svg class="ic" style="left:26px;top:18px" width="20" height="20" viewBox="0 0 20 20"><path d="M10,1.5 L17.5,6.8 Q18.3,7.4 18.3,8.5 V17.5 H1.7 V8.5 Q1.7,7.4 2.5,6.8Z" fill="#a8a9ac" stroke="#a8a9ac" stroke-width="1.2" stroke-linejoin="round"/><path d="M5,14.2 L8.5,9 L12.6,14 V9.6" stroke="#d9dadc" stroke-width="1.5" fill="none" stroke-linecap="round" stroke-linejoin="round"/><circle cx="14.2" cy="7.4" r="0.9" fill="#d9dadc"/><rect x="0.5" y="17.2" width="19" height="2.6" rx="1.3" fill="#55595f"/></svg>
    <div class="abs" style="left:58px;top:12px;font-size:31px;line-height:34px;color:#5b5f66">AI</div>
  </div>
  <!-- card 1 -->
  <div class="card" style="left:22px;top:79px">
    <div class="t">Layout &amp;<br>Style</div>
    <svg class="abs" style="left:0;top:0" width="216" height="230" viewBox="0 0 216 230">
      <defs><linearGradient id="pnt" x1="0" y1="0" x2="0" y2="1"><stop offset="0" stop-color="#f6e27e"/><stop offset="1" stop-color="#f2ecd6"/></linearGradient></defs>
      <path d="M63,204 L127,185 L216,200 V230 H153Z" fill="#e4eaf0"/>
      <path d="M127,92 L216,110 V187 L127,168Z" fill="#e8dcc6"/>
      <g stroke="#d3c4aa" stroke-width="1.1"><line x1="127" y1="100" x2="216" y2="118"/><line x1="127" y1="108" x2="216" y2="126"/><line x1="127" y1="116" x2="216" y2="134"/><line x1="127" y1="124" x2="216" y2="142"/><line x1="127" y1="132" x2="216" y2="150"/><line x1="127" y1="140" x2="216" y2="158"/><line x1="127" y1="148" x2="216" y2="166"/><line x1="127" y1="156" x2="216" y2="174"/><line x1="127" y1="164" x2="216" y2="182"/></g>
      <path d="M61,114 L127,92 V186 L63,205Z" fill="#f4f7fa" stroke="#c3ccd6" stroke-width="1.2"/>
      <path d="M63,205 L127,186 L127,190 L66,209Z" fill="#d5dde5"/>
      <path d="M81,122 L110,114 V151 L81,159Z" fill="url(#pnt)"/>
      <ellipse cx="150" cy="204" rx="33" ry="13" fill="#1a45c8"/>
      <path d="M104,190 L106,170 M140,196 L142,174 M112,186 L114,172" stroke="#c2281f" stroke-width="1.2"/>
      <path d="M103,158 Q100,146 112,149 Q122,150 126,162 L142,160 Q150,160 148,172 Q146,182 132,182 L110,180 Q102,176 103,158Z" fill="#d1271f"/>
      <path d="M112,149 Q122,150 126,162 L120,170 Q108,168 106,160Z" fill="#e0362c"/>
      <path d="M156,180 V200 Q165,206 174,200 V180Z" fill="#f1ebd3"/><ellipse cx="165" cy="179" rx="17" ry="6.5" fill="#f7f2de"/>
      <line x1="204" y1="122" x2="204" y2="200" stroke="#2d4db3" stroke-width="2.5"/><ellipse cx="200" cy="201" rx="12" ry="4" fill="#2d4db3"/><path d="M190,129 L210,121" stroke="#e08a3c" stroke-width="2"/><path d="M186,136 Q186,128 192,128 Q197,128 197,136Z" fill="#2d4db3"/>
    </svg>
  </div>
  <!-- card 2 -->
  <div class="card" style="left:252px;top:79px;width:230px">
    <div class="t">Layout</div>
    <svg class="abs" style="left:0;top:0" width="230" height="230" viewBox="0 0 230 230">
      <path d="M50,179 L131,145 L230,187 V222 L200,232 H84Z" fill="#efece6" stroke="#d5d0c6" stroke-width="1"/>
      <path d="M60,181 L131,151 L226,191" stroke="#fff" stroke-width="1.5" fill="none"/>
      <path d="M123,199 L148,189 L188,205 L163,215Z" fill="#fff" stroke="#d9d4ca" stroke-width="1"/><line x1="135" y1="194" x2="175" y2="210" stroke="#d9d4ca"/>
      <ellipse cx="94" cy="180" rx="12" ry="6" fill="none" stroke="#a9a49b" stroke-width="1.3"/>
      <path d="M99,134 L166,108 L203,122 V151 L135,173 L99,159Z" fill="#3f86f2"/>
      <path d="M99,134 L166,108 L203,122 L137,148Z" fill="#5a9af6"/>
      <path d="M103,128 L168,103 L180,107 V124 L115,150 L103,146Z" fill="#2f78ea"/>
      <path d="M94,144 L129,156 V173 L94,162Z" fill="#dcc196"/><path d="M94,144 L100,141 L135,153 L129,156Z" fill="#ead6b3"/>
      <path d="M176,114 L196,106 L203,109 V124 L183,131Z" fill="#dcc196"/>
      <path d="M145,122 L163,112 L171,133 L151,138Z" fill="#f7f7f7"/>
      <path d="M154,155 L195,141 L230,151 V169 L186,175 L154,165Z" fill="#b7d3e6" opacity="0.9"/>
      <path d="M154,155 L195,141 L230,151 L190,162Z" fill="#cfe2ee"/>
      <rect x="183" y="168" width="7" height="24" fill="#d8b98a"/><rect x="160" y="163" width="5" height="16" fill="#d8b98a"/>
    </svg>
  </div>
  <!-- card 3 -->
  <div class="card" style="left:22px;top:323px">
    <div class="t">Style</div>
    <svg class="abs" style="left:0;top:0" width="216" height="230" viewBox="0 0 216 230">
      <defs><linearGradient id="blk" x1="0" y1="0" x2="1" y2="0.3"><stop offset="0" stop-color="#f5d63e"/><stop offset="0.6" stop-color="#f6df6a"/><stop offset="1" stop-color="#efe9d2"/></linearGradient></defs>
      <path d="M63,127 Q90,108 163,109 V126 Q95,125 75,142 V178 L63,170Z" fill="#cfe0f7"/>
      <path d="M87,142 L100,125 L110,137 L115,132 L124,142Z" fill="#93b8ee"/><circle cx="113" cy="127" r="2.5" fill="#93b8ee"/>
      <path d="M144,127 L156,134 L150,136 L154,143 L151,145 L147,138 L142,141Z" fill="#90a8cc"/>
      <path d="M192,112 Q205,112 216,114 V132 Q205,130 192,131Z" fill="#c9dcf6"/>
      <path d="M63,197 L127,171 L216,189 V230 H153Z" fill="#c8985c"/>
      <path d="M75,196 L127,176 L216,192 V226 L153,230Z" fill="#d9ad74"/>
      <path d="M89,166 L144,150 L146,163 L93,181Z" fill="#e2c595"/>
      <path d="M93,180 L145,162 L216,176 V214 L165,222 L100,196Z" fill="#f8f5ee"/>
      <path d="M96,170 Q101,163 110,165 L114,176 L100,181Z" fill="#fff"/><path d="M120,161 Q125,155 134,157 L137,168 L123,172Z" fill="#fff"/>
      <path d="M106,183 L161,162 L216,172 V215 L173,219 L108,194Z" fill="url(#blk)"/>
      <path d="M177,173 Q197,170 216,166 V190 Q197,191 180,196Z" fill="#c6dbf6" opacity="0.9"/>
    </svg>
  </div>
  <!-- card 4 -->
  <div class="card" style="left:252px;top:323px;width:230px">
    <div class="t">Ceiling</div>
    <svg class="abs" style="left:0;top:0" width="230" height="230" viewBox="0 0 230 230">
      <path d="M80,132 L178,97 L230,105 V193 L200,200 L80,146Z" fill="#e6ecf0"/>
      <path d="M80,132 L80,146 L200,200 L200,186Z" fill="#c9d3da"/>
      <path d="M80,132 L178,97 L230,105 V112 L182,106 L92,137Z" fill="#d7e0e6"/>
      <path d="M110,150 L190,118 L230,124 V172 L200,182Z" fill="#f3f6f9"/>
      <path d="M135,150 L215,122" stroke="#fff" stroke-width="4"/><path d="M150,160 L220,135" stroke="#e9eef2" stroke-width="3"/>
      <g fill="#f8e7a0"><circle cx="97" cy="138" r="2.5"/><circle cx="150" cy="118" r="2.5"/><circle cx="200" cy="113" r="2.5"/><circle cx="130" cy="165" r="2.5"/><circle cx="178" cy="172" r="2.5"/></g>
      <line x1="172" y1="135" x2="150" y2="183" stroke="#4a4d52" stroke-width="0.9"/><line x1="172" y1="135" x2="194" y2="183" stroke="#4a4d52" stroke-width="0.9"/><circle cx="172" cy="134" r="2" fill="#4a4d52"/>
      <ellipse cx="172" cy="195" rx="37" ry="15" fill="#3d7fe0"/><ellipse cx="172" cy="193" rx="24" ry="8" fill="#6aa0ea"/>
      <path d="M161,192 Q172,180 183,192 Q181,203 172,203 Q163,203 161,192Z" fill="#f7cf45"/>
    </svg>
  </div>
</div>
<div class="abs" style="left:0;top:501px;width:85px;height:71px;border:4px solid #ff1a1a;border-radius:7px"></div>


<div id="rp1">
  <div class="abs" style="left:0;top:0;width:35px;height:50px;background:#f5f6f8"></div>
  <svg class="ic" style="left:17px;top:13px" width="10" height="22" viewBox="0 0 10 22"><g fill="#5b5f66"><circle cx="2" cy="2.5" r="1.7"/><circle cx="8" cy="2.5" r="1.7"/><circle cx="2" cy="11" r="1.7"/><circle cx="8" cy="11" r="1.7"/><circle cx="2" cy="19.5" r="1.7"/><circle cx="8" cy="19.5" r="1.7"/></g></svg>
  <div class="abs" style="left:35.5px;top:0;width:198.5px;height:50px;background:#fff"></div>
  <div class="abs" style="left:35.5px;top:0;width:198.5px;height:50px;text-align:center;font-size:23px;font-weight:bold;line-height:50px;color:#1a73e8">View</div>
  <div class="abs" style="left:234px;top:0;width:198px;height:50px;text-align:center;font-size:22px;font-weight:bold;line-height:50px;color:#5c6066">Select Room</div>
  <svg class="abs" style="left:0;top:50px" width="432" height="323" viewBox="0 0 432 323">
    <defs>
      <linearGradient id="sky" x1="0" y1="0" x2="0" y2="1"><stop offset="0" stop-color="#dceef6"/><stop offset="0.15" stop-color="#eef5f7"/><stop offset="0.35" stop-color="#f6f7f8"/><stop offset="0.6" stop-color="#eceeef"/><stop offset="1" stop-color="#e6e8ea"/></linearGradient>
      <linearGradient id="fade" x1="0" y1="0" x2="0" y2="1"><stop offset="0" stop-color="#f6f7f8" stop-opacity="1"/><stop offset="0.45" stop-color="#f6f7f8" stop-opacity="0.85"/><stop offset="1" stop-color="#f6f7f8" stop-opacity="0"/></linearGradient>
    <linearGradient id="sky2" x1="0" y1="0" x2="0" y2="1"><stop offset="0" stop-color="#dceef6"/><stop offset="1" stop-color="#eef4f6" stop-opacity="0"/></linearGradient>
    </defs>
    <rect width="432" height="323" fill="url(#sky)"/>
    <g stroke="#fbfcfc" stroke-width="1.8" opacity="0.95">
<line x1="0" y1="-780" x2="2200" y2="-350"/>
<line x1="0" y1="-768" x2="2200" y2="-350"/>
<line x1="0" y1="-756" x2="2200" y2="-350"/>
<line x1="0" y1="-744" x2="2200" y2="-350"/>
<line x1="0" y1="-732" x2="2200" y2="-350"/>
<line x1="0" y1="-720" x2="2200" y2="-350"/>
<line x1="0" y1="-708" x2="2200" y2="-350"/>
<line x1="0" y1="-696" x2="2200" y2="-350"/>
<line x1="0" y1="-684" x2="2200" y2="-350"/>
<line x1="0" y1="-672" x2="2200" y2="-350"/>
<line x1="0" y1="-660" x2="2200" y2="-350"/>
<line x1="0" y1="-648" x2="2200" y2="-350"/>
<line x1="0" y1="-636" x2="2200" y2="-350"/>
<line x1="0" y1="-624" x2="2200" y2="-350"/>
<line x1="0" y1="-612" x2="2200" y2="-350"/>
<line x1="0" y1="-600" x2="2200" y2="-350"/>
<line x1="0" y1="-588" x2="2200" y2="-350"/>
<line x1="0" y1="-576" x2="2200" y2="-350"/>
<line x1="0" y1="-564" x2="2200" y2="-350"/>
<line x1="0" y1="-552" x2="2200" y2="-350"/>
<line x1="0" y1="-540" x2="2200" y2="-350"/>
<line x1="0" y1="-528" x2="2200" y2="-350"/>
<line x1="0" y1="-516" x2="2200" y2="-350"/>
<line x1="0" y1="-504" x2="2200" y2="-350"/>
<line x1="0" y1="-492" x2="2200" y2="-350"/>
<line x1="0" y1="-480" x2="2200" y2="-350"/>
<line x1="0" y1="-468" x2="2200" y2="-350"/>
<line x1="0" y1="-456" x2="2200" y2="-350"/>
<line x1="0" y1="-444" x2="2200" y2="-350"/>
<line x1="0" y1="-432" x2="2200" y2="-350"/>
<line x1="0" y1="-420" x2="2200" y2="-350"/>
<line x1="0" y1="-408" x2="2200" y2="-350"/>
<line x1="0" y1="-396" x2="2200" y2="-350"/>
<line x1="0" y1="-384" x2="2200" y2="-350"/>
<line x1="0" y1="-372" x2="2200" y2="-350"/>
<line x1="0" y1="-360" x2="2200" y2="-350"/>
<line x1="0" y1="-348" x2="2200" y2="-350"/>
<line x1="0" y1="-336" x2="2200" y2="-350"/>
<line x1="0" y1="-324" x2="2200" y2="-350"/>
<line x1="0" y1="-312" x2="2200" y2="-350"/>
<line x1="0" y1="-300" x2="2200" y2="-350"/>
<line x1="0" y1="-288" x2="2200" y2="-350"/>
<line x1="0" y1="-276" x2="2200" y2="-350"/>
<line x1="0" y1="-264" x2="2200" y2="-350"/>
<line x1="0" y1="-252" x2="2200" y2="-350"/>
<line x1="0" y1="-240" x2="2200" y2="-350"/>
<line x1="0" y1="-228" x2="2200" y2="-350"/>
<line x1="0" y1="-216" x2="2200" y2="-350"/>
<line x1="0" y1="-204" x2="2200" y2="-350"/>
<line x1="0" y1="-192" x2="2200" y2="-350"/>
<line x1="0" y1="-180" x2="2200" y2="-350"/>
<line x1="0" y1="-168" x2="2200" y2="-350"/>
<line x1="0" y1="-156" x2="2200" y2="-350"/>
<line x1="0" y1="-144" x2="2200" y2="-350"/>
<line x1="0" y1="-132" x2="2200" y2="-350"/>
<line x1="0" y1="-120" x2="2200" y2="-350"/>
<line x1="0" y1="-108" x2="2200" y2="-350"/>
<line x1="0" y1="-96" x2="2200" y2="-350"/>
<line x1="0" y1="-84" x2="2200" y2="-350"/>
<line x1="0" y1="-72" x2="2200" y2="-350"/>
<line x1="0" y1="-60" x2="2200" y2="-350"/>
<line x1="0" y1="-48" x2="2200" y2="-350"/>
<line x1="0" y1="-36" x2="2200" y2="-350"/>
<line x1="0" y1="-24" x2="2200" y2="-350"/>
<line x1="0" y1="-12" x2="2200" y2="-350"/>
<line x1="0" y1="0" x2="2200" y2="-350"/>
<line x1="0" y1="12" x2="2200" y2="-350"/>
<line x1="0" y1="24" x2="2200" y2="-350"/>
<line x1="0" y1="36" x2="2200" y2="-350"/>
<line x1="0" y1="48" x2="2200" y2="-350"/>
<line x1="0" y1="60" x2="2200" y2="-350"/>
<line x1="0" y1="72" x2="2200" y2="-350"/>
<line x1="0" y1="84" x2="2200" y2="-350"/>
<line x1="0" y1="96" x2="2200" y2="-350"/>
<line x1="0" y1="108" x2="2200" y2="-350"/>
<line x1="0" y1="120" x2="2200" y2="-350"/>
<line x1="0" y1="132" x2="2200" y2="-350"/>
<line x1="0" y1="144" x2="2200" y2="-350"/>
<line x1="0" y1="156" x2="2200" y2="-350"/>
<line x1="0" y1="168" x2="2200" y2="-350"/>
<line x1="0" y1="180" x2="2200" y2="-350"/>
<line x1="0" y1="192" x2="2200" y2="-350"/>
<line x1="0" y1="204" x2="2200" y2="-350"/>
<line x1="0" y1="216" x2="2200" y2="-350"/>
<line x1="0" y1="228" x2="2200" y2="-350"/>
<line x1="0" y1="240" x2="2200" y2="-350"/>
<line x1="0" y1="252" x2="2200" y2="-350"/>
<line x1="0" y1="264" x2="2200" y2="-350"/>
<line x1="0" y1="276" x2="2200" y2="-350"/>
<line x1="0" y1="288" x2="2200" y2="-350"/>
<line x1="0" y1="300" x2="2200" y2="-350"/>
<line x1="0" y1="312" x2="2200" y2="-350"/>
<line x1="0" y1="324" x2="2200" y2="-350"/>
<line x1="0" y1="336" x2="2200" y2="-350"/>
<line x1="0" y1="348" x2="2200" y2="-350"/>
<line x1="0" y1="360" x2="2200" y2="-350"/>
<line x1="0" y1="372" x2="2200" y2="-350"/>
<line x1="0" y1="384" x2="2200" y2="-350"/>
<line x1="0" y1="396" x2="2200" y2="-350"/>
<line x1="0" y1="408" x2="2200" y2="-350"/>
<line x1="0" y1="420" x2="2200" y2="-350"/>
<line x1="0" y1="432" x2="2200" y2="-350"/>
<line x1="0" y1="444" x2="2200" y2="-350"/>
<line x1="0" y1="456" x2="2200" y2="-350"/>
<line x1="0" y1="468" x2="2200" y2="-350"/>
<line x1="0" y1="480" x2="2200" y2="-350"/>
<line x1="0" y1="492" x2="2200" y2="-350"/>
<line x1="0" y1="504" x2="2200" y2="-350"/>
<line x1="0" y1="516" x2="2200" y2="-350"/>
<line x1="0" y1="528" x2="2200" y2="-350"/>
<line x1="0" y1="540" x2="2200" y2="-350"/>
<line x1="0" y1="552" x2="2200" y2="-350"/>
<line x1="0" y1="564" x2="2200" y2="-350"/>
<line x1="0" y1="576" x2="2200" y2="-350"/>
<line x1="0" y1="588" x2="2200" y2="-350"/>
<line x1="0" y1="600" x2="2200" y2="-350"/>
<line x1="0" y1="612" x2="2200" y2="-350"/>
<line x1="0" y1="624" x2="2200" y2="-350"/>
<line x1="0" y1="636" x2="2200" y2="-350"/>
<line x1="0" y1="648" x2="2200" y2="-350"/>
</g><g stroke="#fbfcfc" stroke-width="1.8" opacity="0.95">
<line x1="-640" y1="340" x2="-700" y2="-650"/>
<line x1="-616" y1="340" x2="-700" y2="-650"/>
<line x1="-592" y1="340" x2="-700" y2="-650"/>
<line x1="-568" y1="340" x2="-700" y2="-650"/>
<line x1="-544" y1="340" x2="-700" y2="-650"/>
<line x1="-520" y1="340" x2="-700" y2="-650"/>
<line x1="-496" y1="340" x2="-700" y2="-650"/>
<line x1="-472" y1="340" x2="-700" y2="-650"/>
<line x1="-448" y1="340" x2="-700" y2="-650"/>
<line x1="-424" y1="340" x2="-700" y2="-650"/>
<line x1="-400" y1="340" x2="-700" y2="-650"/>
<line x1="-376" y1="340" x2="-700" y2="-650"/>
<line x1="-352" y1="340" x2="-700" y2="-650"/>
<line x1="-328" y1="340" x2="-700" y2="-650"/>
<line x1="-304" y1="340" x2="-700" y2="-650"/>
<line x1="-280" y1="340" x2="-700" y2="-650"/>
<line x1="-256" y1="340" x2="-700" y2="-650"/>
<line x1="-232" y1="340" x2="-700" y2="-650"/>
<line x1="-208" y1="340" x2="-700" y2="-650"/>
<line x1="-184" y1="340" x2="-700" y2="-650"/>
<line x1="-160" y1="340" x2="-700" y2="-650"/>
<line x1="-136" y1="340" x2="-700" y2="-650"/>
<line x1="-112" y1="340" x2="-700" y2="-650"/>
<line x1="-88" y1="340" x2="-700" y2="-650"/>
<line x1="-64" y1="340" x2="-700" y2="-650"/>
<line x1="-40" y1="340" x2="-700" y2="-650"/>
<line x1="-16" y1="340" x2="-700" y2="-650"/>
<line x1="8" y1="340" x2="-700" y2="-650"/>
<line x1="32" y1="340" x2="-700" y2="-650"/>
<line x1="56" y1="340" x2="-700" y2="-650"/>
<line x1="80" y1="340" x2="-700" y2="-650"/>
<line x1="104" y1="340" x2="-700" y2="-650"/>
<line x1="128" y1="340" x2="-700" y2="-650"/>
<line x1="152" y1="340" x2="-700" y2="-650"/>
<line x1="176" y1="340" x2="-700" y2="-650"/>
<line x1="200" y1="340" x2="-700" y2="-650"/>
<line x1="224" y1="340" x2="-700" y2="-650"/>
<line x1="248" y1="340" x2="-700" y2="-650"/>
<line x1="272" y1="340" x2="-700" y2="-650"/>
<line x1="296" y1="340" x2="-700" y2="-650"/>
<line x1="320" y1="340" x2="-700" y2="-650"/>
<line x1="344" y1="340" x2="-700" y2="-650"/>
<line x1="368" y1="340" x2="-700" y2="-650"/>
<line x1="392" y1="340" x2="-700" y2="-650"/>
<line x1="416" y1="340" x2="-700" y2="-650"/>
<line x1="440" y1="340" x2="-700" y2="-650"/>
<line x1="464" y1="340" x2="-700" y2="-650"/>
<line x1="488" y1="340" x2="-700" y2="-650"/>
<line x1="512" y1="340" x2="-700" y2="-650"/>
<line x1="536" y1="340" x2="-700" y2="-650"/>
<line x1="560" y1="340" x2="-700" y2="-650"/>
<line x1="584" y1="340" x2="-700" y2="-650"/>
<line x1="608" y1="340" x2="-700" y2="-650"/>
<line x1="632" y1="340" x2="-700" y2="-650"/>
<line x1="656" y1="340" x2="-700" y2="-650"/>
<line x1="680" y1="340" x2="-700" y2="-650"/>
<line x1="704" y1="340" x2="-700" y2="-650"/>
<line x1="728" y1="340" x2="-700" y2="-650"/>
<line x1="752" y1="340" x2="-700" y2="-650"/>
<line x1="776" y1="340" x2="-700" y2="-650"/>
<line x1="800" y1="340" x2="-700" y2="-650"/>
<line x1="824" y1="340" x2="-700" y2="-650"/>
<line x1="848" y1="340" x2="-700" y2="-650"/>
<line x1="872" y1="340" x2="-700" y2="-650"/>
<line x1="896" y1="340" x2="-700" y2="-650"/>
<line x1="920" y1="340" x2="-700" y2="-650"/>
<line x1="944" y1="340" x2="-700" y2="-650"/>
<line x1="968" y1="340" x2="-700" y2="-650"/>
<line x1="992" y1="340" x2="-700" y2="-650"/>
<line x1="1016" y1="340" x2="-700" y2="-650"/>
    </g>
    <rect width="432" height="200" fill="url(#fade)"/>
    <rect width="432" height="40" fill="url(#sky2)"/>
    <g transform="translate(52,86) scale(0.156495)">
      <polygon points="235,575 340,545 600,850 560,870" fill="#b58a5e"/>
      <polygon points="1140,590 1210,590 1850,850 1540,1170 1130,900" fill="#b08459"/>
      <polygon points="620,860 800,780 1120,940 890,1080" fill="#d6d0ca"/>
      <polygon points="125,250 760,135 775,400 230,600" fill="#dedee0"/>
      <polygon points="760,135 1140,140 1150,330 775,400" fill="#e6e6e8"/>
      <polygon points="1140,140 1220,250 1210,290 1150,300" fill="#cfcfd2"/>
      <polygon points="1220,250 2000,440 1900,880 1850,850 1650,760 1210,600" fill="#e7e7e9"/>
      <polygon points="2000,440 2010,445 1910,880 1900,880" fill="#f5f5f5"/>
      <polygon points="830,360 1205,250 1210,600 1140,610 900,560" fill="#e2e3e5"/>
      <polygon points="295,370 550,430 590,850 330,690" fill="#efeeeb"/>
      <polygon points="505,560 560,580 590,845 535,820" fill="#5b6370"/>
      <polygon points="430,590 500,600 495,625 435,610" fill="#222"/>
      <polygon points="545,430 800,370 810,800 600,860" fill="#e6e6e4"/>
      <polygon points="800,370 1130,480 1120,940 810,800" fill="#efefed"/>
      <polygon points="810,470 890,480 895,800 815,790" fill="#e4e6e8"/>
      <polygon points="1200,370 1650,500 1590,1065 1200,870" fill="#f0f0f0"/>
      <polygon points="1590,900 1655,890 1650,1010 1590,1065" fill="#f3dfc6"/>
      <g fill="#fafafa" stroke="#b9b9b9" stroke-width="8">
        <polygon points="560,205 625,195 640,360 575,370"/>
        <polygon points="900,170 970,170 965,310 905,315"/>
        <polygon points="1290,310 1370,325 1365,410 1295,395"/>
        <polygon points="1700,420 1815,440 1790,660 1680,640"/>
      </g>
    </g>
    <path d="M8,302 L26,318 M8,316 L14,322" stroke="#8a8d91" stroke-width="1.5"/>
  </svg>
</div>

<div id="rp2">
  <div class="abs" style="left:0;top:0;width:432px;height:61px;background:#f6f6f7"></div>
  <svg class="ic" style="left:18px;top:21px" width="10" height="24" viewBox="0 0 10 24"><g fill="#5b5f66"><circle cx="2" cy="2" r="1.7"/><circle cx="8" cy="2" r="1.7"/><circle cx="2" cy="8.7" r="1.7"/><circle cx="8" cy="8.7" r="1.7"/><circle cx="2" cy="15.3" r="1.7"/><circle cx="8" cy="15.3" r="1.7"/><circle cx="2" cy="22" r="1.7"/><circle cx="8" cy="22" r="1.7"/></g></svg>
  <div class="abs" style="left:37px;top:17px;font-size:26px;font-weight:bold;line-height:30px;color:#555a61">Floor Properties</div>
  <svg class="ic" style="left:400px;top:21px" width="19" height="19" viewBox="0 0 19 19"><path d="M11,1 H18 V8 M18,1 L12,7 M8,18 H1 V11 M1,18 L7,12" stroke="#9a9da2" stroke-width="2" fill="none"/></svg>

  <div class="abs" style="left:22px;top:90px;width:387.5px;height:49.5px;background:#f5f5f6;border-radius:3px"></div>
  <svg class="ic" style="left:38px;top:99.7px" width="32" height="30" viewBox="0 0 32 30"><path d="M16.5,2.5 L2.5,10 L14,16.5" stroke="#74787d" stroke-width="4.2" fill="none" stroke-linejoin="round" stroke-linecap="round"/><path d="M1.5,19.5 L10.5,14.5 L14.6,17 L21,13 L28.5,19.5 L14.6,27.5Z" fill="#74787d" stroke="#74787d" stroke-width="2.5" stroke-linejoin="round"/><path d="M25.9,1 V11.3 M20.7,6.1 H31" stroke="#74787d" stroke-width="3.2"/></svg>
  <div class="abs" style="left:80px;top:101px;font-size:23px;line-height:28px;color:#5b5f66;letter-spacing:0.6px">New upper floor</div>
  <div class="abs" style="left:22px;top:154px;width:387.5px;height:50.5px;background:#f5f5f6;border-radius:3px"></div>
  <svg class="ic" style="left:38px;top:166.5px" width="32" height="28" viewBox="0 0 32 28"><path d="M1.5,9 L14.6,1.5 L28.2,9 L21,13.5 L14.6,17Z" fill="#74787d" stroke="#74787d" stroke-width="2.5" stroke-linejoin="round"/><path d="M7.5,12.5 L2.5,16 L14.6,23 L16.5,21.5" stroke="#74787d" stroke-width="4.2" fill="none" stroke-linejoin="round" stroke-linecap="round"/><path d="M25.4,13.8 V24 M20.2,18.7 H30.5" stroke="#74787d" stroke-width="3"/></svg>
  <div class="abs" style="left:80px;top:165px;font-size:23px;line-height:28px;color:#5b5f66;letter-spacing:0.6px">New lower floor</div>

  <div class="abs" style="left:22px;top:230px;font-size:22px;line-height:26px;color:#5b5f66;letter-spacing:1px">Current Floor</div>
  <div class="abs" style="left:318px;top:230px;font-size:22px;line-height:26px;color:#a6c8f5;letter-spacing:0.5px">Redo</div>
  <svg class="ic" style="left:386px;top:233px" width="23" height="23" viewBox="0 0 23 23"><circle cx="11.5" cy="11.5" r="11" fill="#d9d9d9"/><path d="M11,5 V12 L15,16" stroke="#fff" stroke-width="2.2" fill="none"/></svg>
  <div class="abs" style="left:22px;top:269px;width:387.5px;height:43px;border:1.5px solid #dedede;border-radius:4px;background:#fff"></div>
  <div class="abs" style="left:23.5px;top:270.5px;width:97.5px;height:40px;background:#f9fafa;border-right:1.5px solid #dedede"></div>
  <div class="abs" style="left:42px;top:279px;font-size:22px;line-height:26px;color:#c3c5c8">1F</div>
  <div class="abs" style="left:98px;top:292px;width:0;height:0;border-left:5px solid transparent;border-right:5px solid transparent;border-top:5px solid #c3c5c8"></div>
  <div class="abs" style="left:142px;top:279px;font-size:22px;line-height:26px;color:#2b2f36">1F</div>

  <div class="abs" style="left:0;top:333px;width:432px;height:1.5px;background:#ececec"></div>
  <div class="abs" style="left:22px;top:355px;font-size:22px;font-weight:bold;line-height:26px;color:#30343a">Basic Parameters</div>
  <svg class="ic" style="left:386px;top:360px" width="22" height="14" viewBox="0 0 22 14"><path d="M2,12 L11,3 L20,12" stroke="#62666d" stroke-width="2.4" fill="none"/></svg>

  <div class="abs" style="left:22px;top:407px;font-size:23px;line-height:28px;color:#7b7f86">Usable area</div>
  <svg class="ic" style="left:153px;top:409px" width="12" height="22" viewBox="0 0 12 22"><path d="M2,8 L6,3 L10,8 M2,14 L6,19 L10,14" stroke="#9fa2a7" stroke-width="1.6" fill="none"/></svg>
  <svg class="ic" style="left:179px;top:409px" width="23" height="23" viewBox="0 0 23 23"><circle cx="11.5" cy="11.5" r="11" fill="#d3d4d6"/><circle cx="13" cy="6.5" r="1.8" fill="#fff"/><path d="M12,10 L10,18" stroke="#fff" stroke-width="2.5" stroke-linecap="round"/></svg>
  <div class="inp" style="top:400.5px">62.01<span>m²</span></div>
  <div class="abs" style="left:22px;top:465px;font-size:23px;line-height:28px;color:#30343a">Floor height</div>
  <div class="inp" style="top:458.5px">2800<span>mm</span></div>
  <div class="abs" style="left:22px;top:522px;font-size:23px;line-height:28px;color:#30343a">Floor Thickness</div>
  <div class="inp" style="top:515.5px">120<span>mm</span></div>
  <div class="abs" style="left:22px;top:577px;font-size:23px;line-height:28px;color:#7b7f86;letter-spacing:0.4px">Floor plan opacity</div>
  <div class="abs" style="left:214px;top:573px;width:28px;height:35px;background:#f0f0f1;border-radius:3px;font-size:22px;line-height:35px;text-align:center;color:#a7a9ad">Y</div>
  <div class="abs" style="left:22px;top:628.5px;width:212px;height:3.5px;background:#1677ff;border-radius:2px"></div>
  <div class="abs" style="left:224px;top:620px;width:20px;height:20px;border-radius:50%;background:#1677ff;border:3px solid #fff;box-shadow:0 1px 5px rgba(0,0,0,0.25)"></div>
  <div class="inp" style="top:609.5px;padding-left:21px">100<span>%</span></div>
</div>


<div class="bb" style="left:612px;top:1184px;width:109px">
  <svg class="ic" style="left:15px;top:16px" width="34" height="34" viewBox="0 0 34 34"><path d="M17,0 L33,8 L17,16 L1,8Z" fill="#6b6f76"/><path d="M1,15 L5,13 L17,19 L29,13 L33,15 L17,23Z" fill="#6b6f76"/><path d="M1,22 L5,20 L17,26 L29,20 L33,22 L17,34 L1,22Z" fill="#6b6f76"/><path d="M1,22 L5,20 L17,26 L29,20 L33,22 L17,30Z" fill="#6b6f76"/></svg>
  <div class="abs" style="left:66px;top:18px;font-size:26px;font-weight:bold;line-height:30px;color:#6b6f76">1F</div>
</div>
<div class="bb" style="left:735px;top:1184px;width:216px">
  <div class="abs" style="left:15px;top:11px;width:93px;height:43px;background:#dde8f7;border-radius:3px"></div>
  <div class="abs" style="left:33px;top:18px;font-size:26px;font-weight:bold;line-height:30px;color:#2a7ff0">2D</div>
  <div class="abs" style="left:76px;top:31px;width:0;height:0;border-left:7px solid transparent;border-right:7px solid transparent;border-top:7px solid #a3a7ad"></div>
  <div class="abs" style="left:128px;top:18px;font-size:26px;font-weight:bold;line-height:30px;color:#6b6f76">3D</div>
  <div class="abs" style="left:168px;top:31px;width:0;height:0;border-left:7px solid transparent;border-right:7px solid transparent;border-top:7px solid #b5b8bd"></div>
</div>
<div class="bb" style="left:965px;top:1184px;width:166px">
  <svg class="ic" style="left:31px;top:19px" width="33" height="27" viewBox="0 0 33 27"><path d="M0,13.5 Q7,0 16.5,0 Q26,0 33,13.5 Q26,27 16.5,27 Q7,27 0,13.5Z" fill="#6b6f76"/><circle cx="16.5" cy="13.5" r="7.5" fill="#fff"/><circle cx="16.5" cy="13.5" r="4.5" fill="#6b6f76"/></svg>
  <svg class="ic" style="left:103px;top:16px" width="34" height="33" viewBox="0 0 34 33"><path d="M8,0 H34 L26,8 H0Z" fill="#6b6f76"/><path d="M27,9 L34,2 V25 L27,32Z" fill="#6b6f76"/><path d="M0,9 H26 V33 H2 Q0,33 0,31Z" fill="#6b6f76"/></svg>
</div>
<div class="bb" style="left:1387px;top:1184px;width:93px">
  <svg class="ic" style="left:32px;top:14px" width="29" height="37" viewBox="0 0 29 37"><path d="M6,16 V10 Q6,1.5 14.5,1.5 Q23,1.5 23,10 V16" stroke="#6b6f76" stroke-width="4" fill="none"/><rect x="0" y="15" width="29" height="22" rx="3" fill="#6b6f76"/><rect x="12.5" y="21" width="4" height="9" rx="2" fill="#fff"/></svg>
</div>
<div class="bb" style="left:1495px;top:1184px;width:93px">
  <svg class="ic" style="left:32px;top:18px" width="29" height="29" viewBox="0 0 29 29"><rect x="0" y="0" width="29" height="12" rx="6" fill="#6b6f76"/><circle cx="6.5" cy="6" r="3.8" fill="#fff"/><rect x="0" y="17" width="29" height="12" rx="6" fill="#6b6f76"/><circle cx="22.5" cy="23" r="3.8" fill="#fff"/></svg>
</div>
<div class="bb" style="left:1603px;top:1184px;width:496px">
  <svg class="ic" style="left:30px;top:21px" width="33" height="25" viewBox="0 0 33 25"><rect width="33" height="25" rx="1.5" fill="#cfd0d3"/><circle cx="9" cy="8" r="2.5" fill="#fff"/><path d="M4,21 L12,14 L16,17 L22,10 L30,21Z" fill="#fff"/></svg>
  <svg class="ic" style="left:102px;top:15px" width="34" height="34" viewBox="0 0 34 34"><path d="M2,10 V2 H10 M24,2 H32 V10 M32,24 V32 H24 M10,32 H2 V24" stroke="#6b6f76" stroke-width="3.5" fill="none"/><circle cx="17" cy="17" r="5.5" fill="#6b6f76"/></svg>
  <svg class="ic" style="left:171px;top:13px" width="42" height="42" viewBox="0 0 42 42"><path d="M17,32 H2 V2 H34 V16" stroke="#6b6f76" stroke-width="3.5" fill="none"/><circle cx="26" cy="26" r="8.5" stroke="#6b6f76" stroke-width="3" fill="#f6f6f8"/><path d="M22,26 H30 M26,22 V30" stroke="#6b6f76" stroke-width="2.2"/><path d="M32,32 L39,39" stroke="#6b6f76" stroke-width="3.5"/></svg>
  <div class="abs" style="left:229px;top:14px;width:1.5px;height:37px;background:#dcdde0"></div>
  <div class="abs" style="left:249px;top:30px;width:27px;height:5px;border-radius:2.5px;background:#6b6f76"></div>
  <div class="abs" style="left:287px;top:8px;width:143.5px;height:49px;border:1.5px solid #dfe0e2;border-radius:4px;background:#f6f6f8"></div>
  <div class="abs" style="left:310px;top:18px;font-size:23px;line-height:28px;color:#2b2f36">100</div>
  <div class="abs" style="left:389px;top:18px;font-size:23px;line-height:28px;color:#b0b3b7">%</div>
  <div class="abs" style="left:443px;top:30px;width:27px;height:5px;border-radius:2.5px;background:#6b6f76"></div>
  <div class="abs" style="left:454px;top:19px;width:5px;height:27px;border-radius:2.5px;background:#6b6f76"></div>
</div>
<svg class="ic" style="left:36px;top:1156px" width="87" height="87" viewBox="0 0 87 87"><circle cx="43.5" cy="43.5" r="43" fill="#2491ea"/><path d="M21,33 Q21,29 25,29 H54 Q58,29 58,33 V51 Q58,55 54,55 H32 L27,62 V55 H25 Q21,55 21,51Z" fill="#f6cd4a"/><path d="M39,29 H54 Q58,29 58,33 V51 Q58,55 54,55 H39Z" fill="#ffa726"/><path d="M31,38 H43 M31,44 H43" stroke="#e89c2a" stroke-width="1.5"/><circle cx="56.5" cy="32" r="8" fill="#e8265e"/><rect x="55.5" y="27.5" width="2" height="8" fill="#fff"/></svg>


</body></html>
